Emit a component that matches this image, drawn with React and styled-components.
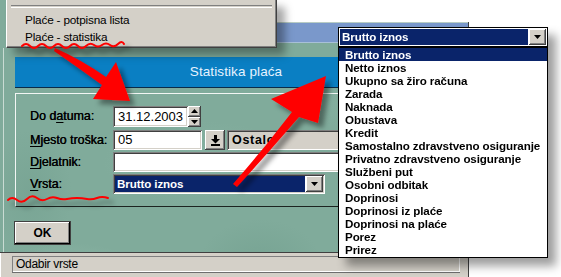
import React from "react";
import styled, { createGlobalStyle } from "styled-components";

const SANS = `"Liberation Sans", Arial, sans-serif`;

const GlobalStyle = createGlobalStyle`
  html, body { margin: 0; padding: 0; background: #ffffff; }
  body { font-family: ${SANS}; }
  #root { width: 561px; height: 277px; }
`;

const marble = `
  radial-gradient(ellipse 110px 50px at 70px 235px, rgba(160,200,185,0.45), transparent 70%),
  radial-gradient(ellipse 90px 70px at 260px 225px, rgba(100,148,130,0.35), transparent 70%),
  radial-gradient(ellipse 140px 60px at 200px 120px, rgba(150,192,176,0.30), transparent 70%),
  radial-gradient(ellipse 60px 90px at 30px 150px, rgba(104,150,132,0.30), transparent 70%),
  radial-gradient(ellipse 120px 40px at 380px 60px, rgba(150,192,176,0.30), transparent 70%),
  #80ab9b
`;

const sunken = `
  box-shadow: inset 1px 1px 0 #808080, inset -1px -1px 0 #ffffff,
    inset 2px 2px 0 #404040, inset -2px -2px 0 #d4d0c8;
`;
const raised = `
  box-shadow: inset -1px -1px 0 #404040, inset 1px 1px 0 #ffffff,
    inset -2px -2px 0 #808080, inset 2px 2px 0 #d4d0c8;
`;

const boldList = `bold 11.6px ${SANS}`;

const Stage = styled.div`
  position: relative;
  width: 561px;
  height: 277px;
  overflow: hidden;
  background: #ffffff;
`;

const Window = styled.div`
  margin-top: 22px;
  width: 469px;
  height: 255px;
  display: flex;
  flex-direction: column;
  box-sizing: border-box;
  border-right: 1px solid #404040;
  background: #d4d0c8;
`;

const TitleBar = styled.div`
  height: 21px;
  flex: none;
  box-sizing: border-box;
  border-top: 1px solid #b8ccc4;
  border-bottom: 1px solid #a8c0d8;
  background: #7a98cb;
`;

const Client = styled.div`
  flex: none;
  height: 210px;
  box-sizing: border-box;
  display: flex;
  flex-direction: column;
  align-items: flex-start;
  padding: 14px 11px 0 15px;
  background: ${marble};
  box-shadow: inset 3px 0 0 #80ab9b, inset 4px 0 0 #c9dbd3;
  border-bottom: 1px solid #404040;
`;

const Header = styled.div`
  flex: none;
  align-self: stretch;
  height: 31px;
  box-sizing: border-box;
  background: #0a7fc3;
  border-bottom: 1px solid #0b2b48;
  color: #e6f3ff;
  font: 13.5px/29px ${SANS};
  text-align: center;
  letter-spacing: 0.1px;
`;

const Frame = styled.div`
  flex: none;
  align-self: stretch;
  margin-top: 5px;
  height: 114px;
  box-sizing: border-box;
  border-top: 1px solid #f2f6f4;
  border-left: 1px solid #f2f6f4;
  border-bottom: 1px solid #1c2420;
  padding: 12px 0 0 14px;
  overflow: hidden;
`;

const Form = styled.div`
  display: flex;
  flex-direction: column;
  gap: 2px;
`;

const Row = styled.div`
  display: flex;
  align-items: flex-start;
  height: ${(p) => p.$h}px;
`;

const Label = styled.div`
  width: 83px;
  flex: none;
  height: 20px;
  font: 12.4px/20px ${SANS};
  color: #000;
  text-shadow: 0.35px 0 0 #000;
  white-space: nowrap;
  u { text-decoration-thickness: 1px; text-underline-offset: 2px; }
`;

const TextBox = styled.div`
  width: ${(p) => p.$w}px;
  height: ${(p) => p.$h || 20}px;
  flex: none;
  box-sizing: border-box;
  padding: 0 5px;
  background: ${(p) => (p.$grey ? "#d4d0c8" : "#ffffff")};
  ${sunken}
  font: ${(p) => (p.$bold ? `bold 12.5px/${p.$h || 20}px ${SANS}` : `13px/${p.$h || 20}px ${SANS}`)};
  letter-spacing: ${(p) => (p.$bold ? "0.7px" : "0")};
  color: #000;
  margin-left: ${(p) => p.$ml || 0}px;
  overflow: hidden;
  white-space: nowrap;
`;

const Spinner = styled.div`
  width: 13px;
  height: 21px;
  flex: none;
  display: flex;
  flex-direction: column;
`;

const SpinBtn = styled.div`
  flex: 1;
  display: flex;
  align-items: center;
  justify-content: center;
  background: #d4d0c8;
  ${raised}
`;

const SquareBtn = styled.div`
  width: 20px;
  height: 20px;
  flex: none;
  margin-left: 3px;
  display: flex;
  align-items: center;
  justify-content: center;
  background: #d4d0c8;
  ${raised}
`;

const Combo = styled.div`
  width: ${(p) => p.$w}px;
  height: 20px;
  flex: none;
  box-sizing: border-box;
  display: flex;
  padding: 2px;
  gap: 1px;
  background: #ffffff;
  ${(p) => (p.$flat ? "border: 1px solid #000; padding: 1px;" : sunken)}
`;

const ComboText = styled.div`
  flex: 1;
  background: #0a246a;
  color: #ffffff;
  font: ${boldList};
  line-height: 16px;
  letter-spacing: -0.1px;
  padding-left: 2px;
  white-space: nowrap;
  overflow: hidden;
`;

const ComboBtn = styled.div`
  width: 17px;
  flex: none;
  display: flex;
  align-items: center;
  justify-content: center;
  background: #d4d0c8;
  ${raised}
`;

const OkButton = styled.div`
  flex: none;
  margin-top: 15px;
  width: 55px;
  height: 22px;
  box-sizing: border-box;
  background: #d4d0c8;
  box-shadow: inset -1px -1px 0 #000, inset 1px 1px 0 #ffffff,
    inset -2px -2px 0 #808080, 0 0 0 1px #404040;
  font: bold 12px/22px ${SANS};
  text-align: center;
  color: #000;
`;

const StatusBar = styled.div`
  flex: 1;
  padding: 3px 8px 0 12px;
  background: #d4d0c8;
  box-shadow: inset 1px 0 0 #ffffff;
`;

const StatusPanel = styled.div`
  height: 16px;
  padding-left: 4px;
  box-shadow: inset 1px 1px 0 #808080, inset -1px -1px 0 #ffffff;
  border-bottom: 1px solid #6e6e6e;
  font: 12px/16px ${SANS};
  letter-spacing: -0.3px;
  color: #000;
`;

/* ---------- popup menu ---------- */
const MenuWrap = styled.div`
  position: absolute;
  left: 0;
  top: 0;
  padding-left: 6px;
  background: #80ab9b;
`;

const Menu = styled.div`
  width: 271px;
  height: 48px;
  box-sizing: border-box;
  background: #d4d0c8;
  border-left: 1px solid #ffffff;
  border-right: 1px solid #404040;
  border-bottom: 1px solid #404040;
  box-shadow: inset -1px -1px 0 #808080, 8px 7px 8px rgba(0, 0, 0, 0.35);
  padding: 5px 4px 0 18px;
`;

const Separator = styled.div`
  margin-left: -14px;
  height: 1px;
  border-top: 1px solid #808080;
  border-bottom: 1px solid #ffffff;
  margin-bottom: 4px;
`;

const MenuItem = styled.div`
  height: 17px;
  font: 11.8px/17px ${SANS};
  letter-spacing: -0.2px;
  color: #000;
`;

/* ---------- dropdown list ---------- */
const Dropdown = styled.div`
  position: absolute;
  left: 338px;
  top: 27px;
  width: 210px;
  filter: drop-shadow(8px 8px 5px rgba(0, 0, 0, 0.38));
`;

const List = styled.div`
  box-sizing: border-box;
  border: 1px solid #000;
  background: #ffffff;
  padding-bottom: 1px;
`;

const ListItem = styled.div`
  height: 13px;
  font: ${boldList};
  line-height: 13px;
  letter-spacing: -0.1px;
  padding-left: 6px;
  white-space: nowrap;
  color: ${(p) => (p.$sel ? "#ffffff" : "#000000")};
  background: ${(p) => (p.$sel ? "#0a246a" : "transparent")};
`;

const Overlay = styled.svg`
  position: absolute;
  left: 0;
  top: 0;
  pointer-events: none;
`;

const TriDown = () => (
  <svg width="7" height="4" viewBox="0 0 7 4"><path d="M0 0h7L3.5 4z" fill="#000" /></svg>
);
const TriUp = () => (
  <svg width="7" height="4" viewBox="0 0 7 4"><path d="M0 4h7L3.5 0z" fill="#000" /></svg>
);
const DownToLine = () => (
  <svg width="9" height="11" viewBox="0 0 9 11">
    <rect x="3" y="0" width="3" height="4" fill="#000" />
    <path d="M0 4h9L4.5 8.5z" fill="#000" />
    <rect x="0" y="9" width="9" height="2" fill="#000" />
  </svg>
);

const items = [
  "Brutto iznos",
  "Netto iznos",
  "Ukupno sa žiro računa",
  "Zarada",
  "Naknada",
  "Obustava",
  "Kredit",
  "Samostalno zdravstveno osiguranje",
  "Privatno zdravstveno osiguranje",
  "Službeni put",
  "Osobni odbitak",
  "Doprinosi",
  "Doprinosi iz plaće",
  "Doprinosi na plaće",
  "Porez",
  "Prirez",
];

const Annotations = () => (
  <Overlay width="561" height="277" viewBox="0 0 561 277">
    <defs>
      <filter id="sh" x="-20%" y="-20%" width="150%" height="150%">
        <feDropShadow dx="5" dy="5" stdDeviation="2.4" floodColor="#000" floodOpacity="0.4" />
      </filter>
    </defs>
    <g filter="url(#sh)" fill="#ff0000">
      <path d="M55,48 Q82,60 106,77 L116,62 L130,101 L93,99 L102,85 Q80,69 54,51 Z" />
      <path d="M233,184 Q263,150 292,112 L271,99 L326,76 L318,123 L299,117 Q269,152 237,187 Z" />
    </g>
    <g fill="none" stroke="#ff0000" strokeWidth="2" strokeLinecap="round" filter="url(#sh)">
      <path d="M22,46 Q26,42 30,46 T38,46 T46,46 T54,46 T62,46 T70,46 T78,46 T86,46 T94,45 T102,45 T110,45 T118,44 T124,44" />
      <path d="M8,200 Q12,196 17,200 T27,199 T37,198 T47,199 T57,198 T67,199 T77,198 T87,199 T97,198 T108,198" />
    </g>
  </Overlay>
);

export default function App() {
  return (
    <>
      <GlobalStyle />
      <Stage>
        <Window>
          <TitleBar />
          <Client>
            <Header>Statistika plaća</Header>
            <Frame>
              <Form>
                <Row $h={22}>
                  <Label>Do d<u>a</u>tuma:</Label>
                  <TextBox $w={75} $h={21}>31.12.2003</TextBox>
                  <Spinner>
                    <SpinBtn><TriUp /></SpinBtn>
                    <SpinBtn><TriDown /></SpinBtn>
                  </Spinner>
                </Row>
                <Row $h={20}>
                  <Label><u>M</u>jesto troška:</Label>
                  <TextBox $w={89}>05</TextBox>
                  <SquareBtn><DownToLine /></SquareBtn>
                  <TextBox $w={140} $ml={2} $grey $bold>Ostalo</TextBox>
                </Row>
                <Row $h={20}>
                  <Label><u>D</u>jelatnik:</Label>
                  <TextBox $w={240} />
                </Row>
                <Row $h={20}>
                  <Label><u>V</u>rsta:</Label>
                  <Combo $w={212}>
                    <ComboText>Brutto iznos</ComboText>
                    <ComboBtn><TriDown /></ComboBtn>
                  </Combo>
                </Row>
              </Form>
            </Frame>
            <OkButton>OK</OkButton>
          </Client>
          <StatusBar>
            <StatusPanel>Odabir vrste</StatusPanel>
          </StatusBar>
        </Window>

        <MenuWrap>
          <Menu>
            <Separator />
            <MenuItem>Plaće - potpisna lista</MenuItem>
            <MenuItem>Plaće - statistika</MenuItem>
          </Menu>
        </MenuWrap>

        <Dropdown>
          <Combo $w={210} $flat>
            <ComboText>Brutto iznos</ComboText>
            <ComboBtn><TriDown /></ComboBtn>
          </Combo>
          <List>
            {items.map((t, i) => (
              <ListItem key={t} $sel={i === 0}>{t}</ListItem>
            ))}
          </List>
        </Dropdown>

        <Annotations />
      </Stage>
    </>
  );
}
